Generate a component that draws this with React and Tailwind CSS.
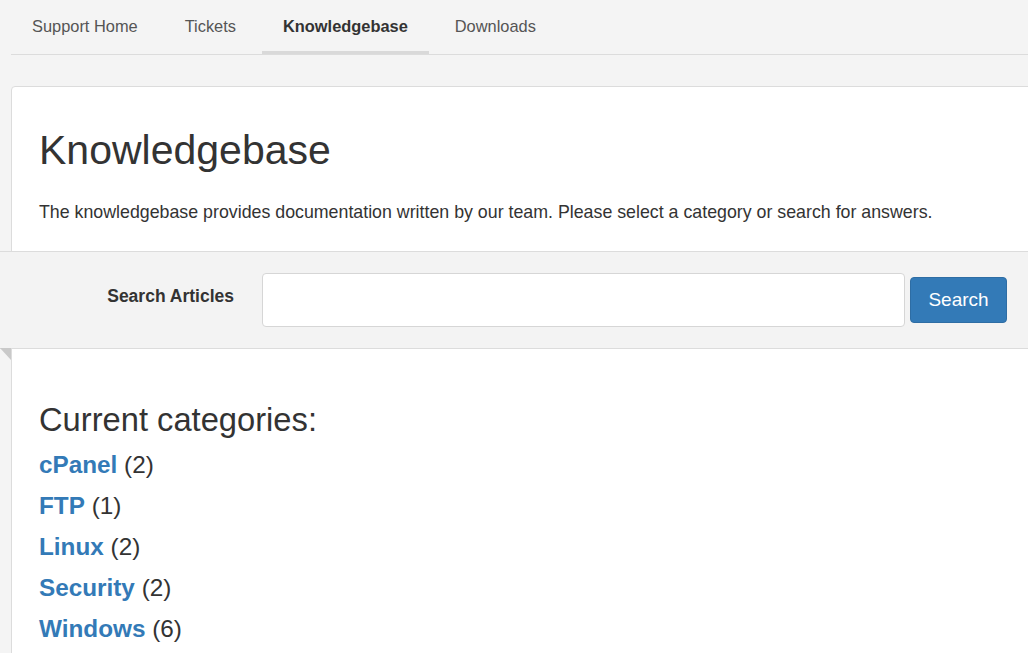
import React from "react";

const tabs = [
  { label: "Support Home", active: false },
  { label: "Tickets", active: false },
  { label: "Knowledgebase", active: true },
  { label: "Downloads", active: false },
];

const cats = [
  ["cPanel", 2],
  ["FTP", 1],
  ["Linux", 2],
  ["Security", 2],
  ["Windows", 6],
];

export default function App() {
  return (
    <div
      className="min-h-screen w-full overflow-hidden bg-[#f4f4f4] text-[#333]"
      style={{ fontFamily: '"Liberation Sans", Arial, sans-serif' }}
    >
      <nav className="ml-[11px] flex h-[55px] gap-[5px] border-b border-[#dcdcdc]">
        {tabs.map((t) => (
          <div
            key={t.label}
            className={
              "flex h-[54px] items-center px-[21px] pt-[1px] text-[16.4px] border-b-[3px] " +
              (t.active
                ? "border-[#d9d9d9] font-bold text-[#333]"
                : "border-transparent text-[#555]")
            }
          >
            {t.label}
          </div>
        ))}
      </nav>

      <div className="ml-[11px] mt-[31px] w-[1100px] rounded-tl-[4px] border border-[#dcdcdc] bg-white pb-[40px]">
        <div className="pl-[27px] pt-[40px]">
          <h1 className="text-[41px] leading-[46px] font-normal">Knowledgebase</h1>
          <p className="mt-[28px] text-[17.8px] leading-[22px]">
            The knowledgebase provides documentation written by our team. Please select a category or search for answers.
          </p>
        </div>

        <div className="relative -ml-[12px] mt-[28px] flex h-[98px] items-start border-y border-[#dcdcdc] bg-[#f3f3f3] pt-[21px]">
          <label className="w-[234px] pt-[12px] text-right text-[17.5px] font-bold leading-[22px] text-[#333]">
            Search Articles
          </label>
          <input
            type="text"
            className="ml-[28px] h-[54px] w-[643px] rounded-[4px] border border-[#d6d6d6] bg-white outline-none"
          />
          <button className="ml-[5px] mt-[4px] h-[46px] w-[97px] rounded-[4px] border border-[#2e6da4] bg-[#337ab7] text-[19px] text-white">
            Search
          </button>
          <div className="absolute left-0 top-full h-0 w-0 border-l-[11px] border-t-[12px] border-l-transparent border-t-[#c9c9c9]" />
        </div>

        <div className="pl-[27px] pt-[51px]">
          <h3 className="text-[32.7px] font-normal leading-[40px]">Current categories:</h3>
          <ul className="mt-[4px]">
            {cats.map(([n, c]) => (
              <li key={n} className="h-[41px] text-[24.3px] leading-[41px]">
                <a className="font-bold text-[#337ab7]">{n}</a>{" "}
                <span className="text-[#333]">({c})</span>
              </li>
            ))}
          </ul>
        </div>
      </div>
    </div>
  );
}
